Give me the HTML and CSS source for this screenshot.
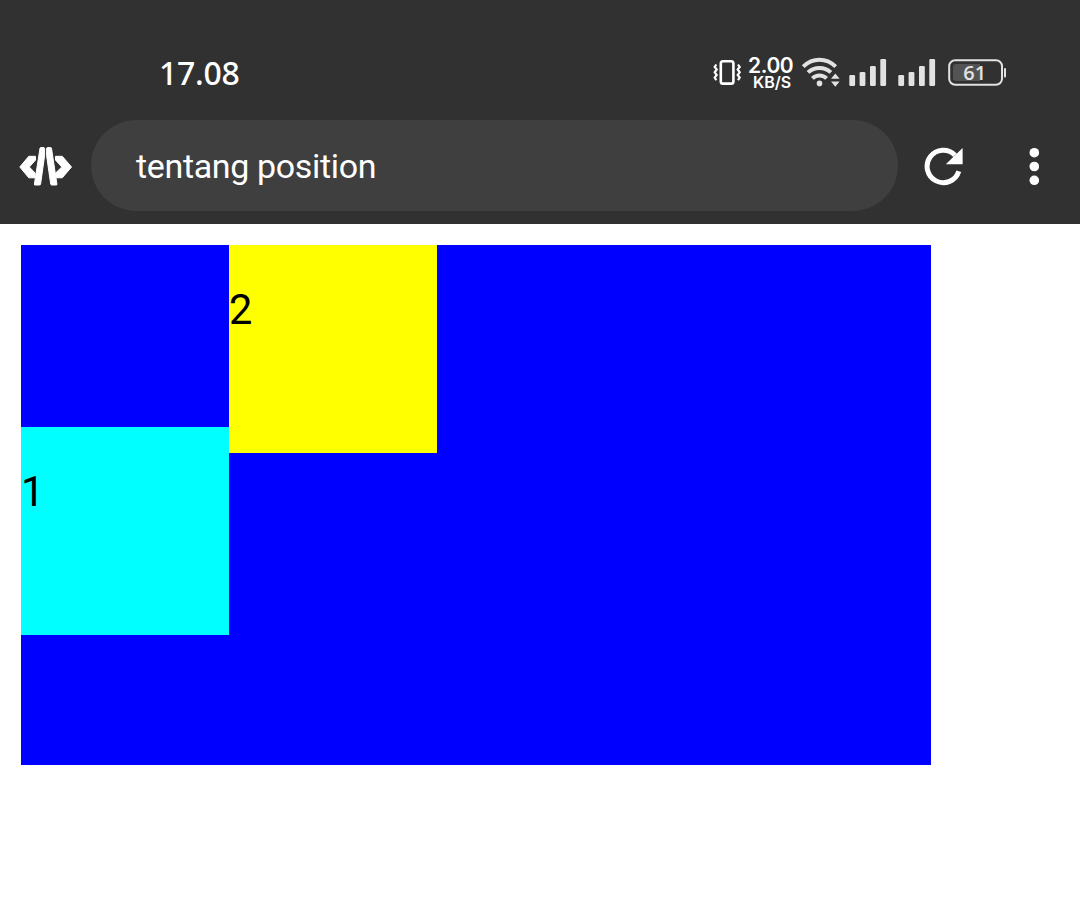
FILE: index.html
```html
<!DOCTYPE html>
<html lang="id">
<head>
<meta charset="utf-8">
<title>tentang position</title>
<link rel="stylesheet" href="styles.css">
</head>
<body>
<header class="chrome">
  <div class="status">
    <span class="time">17.08</span>
    <div class="indicators">
      <svg class="vibrate" width="30" height="30" viewBox="712 57 30 30" fill="none" stroke="#fff">
        <rect x="720.8" y="61.2" width="12.6" height="22.4" rx="2.2" stroke-width="2.6"/>
        <path d="M716.3 64.5l-1.6 2.5 2 2.5-2 2.8 2 2.7-2 2.5 1.6 2.7M738 64.5l1.7 2.5-2 2.5 2 2.8-2 2.7 2 2.5-1.7 2.7" stroke-width="2.2"/>
      </svg>
      <div class="speed"><span class="rate">2.00</span><span class="unit">KB/S</span></div>
      <svg class="wifi" width="40" height="32" viewBox="801 56 40 32">
        <g fill="none" stroke="#e2e2e2" stroke-width="4">
          <path d="M803.2 66.6c9.5-9.2 23-9.2 32.5 0"/>
          <path d="M808 72.4c6.5-6 16.4-6 22.9 0"/>
          <path d="M812.4 78.4c4-4 10.2-4 14.2 0"/>
        </g>
        <circle cx="819.5" cy="83.4" r="2.8" fill="#e2e2e2"/>
        <path d="M831 78.8l4.3-5.2 4.3 5.2zM831 81.5h8.6l-4.3 5.2z" fill="#e2e2e2"/>
      </svg>
      <svg class="signal" width="38" height="28" viewBox="849 59 38 28" fill="#e2e2e2">
        <rect x="849.3" y="75" width="5.8" height="11" rx="1.3"/><rect x="859.6" y="72" width="5.8" height="14" rx="1.3"/><rect x="870" y="66" width="5.8" height="20" rx="1.3"/><rect x="880.3" y="59" width="5.8" height="27" rx="1.3"/>
      </svg>
      <svg class="signal second" width="38" height="28" viewBox="849 59 38 28" fill="#e2e2e2">
        <rect x="849.3" y="75" width="5.8" height="11" rx="1.3"/><rect x="859.6" y="72" width="5.8" height="14" rx="1.3"/><rect x="870" y="66" width="5.8" height="20" rx="1.3"/><rect x="880.3" y="59" width="5.8" height="27" rx="1.3"/>
      </svg>
      <svg class="battery" width="60" height="28" viewBox="948 59 60 28">
        <rect x="949.2" y="60.2" width="52.8" height="24.6" rx="6" fill="none" stroke="#e2e2e2" stroke-width="2"/>
        <path d="M956 64H980V81H956Q953 81 953 78V67Q953 64 956 64z" fill="#535353"/>
        <rect x="1004" y="68" width="2" height="9.5" rx=".8" fill="#e2e2e2"/>
        <text class="charge" x="974.8" y="80" text-anchor="middle">61</text>
      </svg>
    </div>
  </div>
  <div class="toolbar">
    <svg class="logo" width="54" height="42" viewBox="19 146 54 42" fill="#fff" stroke="#fff" stroke-width="1" stroke-linejoin="round">
      <path d="M28.8 156.3h6.7v3.8l-6.2 6.9 5.8 6v4.8h-6.3L19.8 167z"/>
      <path d="M55.5 156.3h6.8L71.5 167l-9.2 10.8h-6.1l-.6-4.8 6.2-6-6.3-6.9z"/>
      <path d="M41 147.5h3l.6.8v7.4L40.6 184q-.2 1-1 1h-5l-.2-1L40 148.3q.2-.8 1-.8z"/>
      <path d="M47.3 147.5h3.2q.8 0 1 .8L56.9 184l-.2 1h-5q-.8 0-1-1L46.6 155.7v-7.4z"/>
    </svg>
    <div class="field">tentang position</div>
    <svg class="reload" width="40" height="40" viewBox="924 147 40 40">
      <path d="M958.8 171.2A16.2 16.2 0 1 1 955 155.2" fill="none" stroke="#fff" stroke-width="5"/>
      <path d="M962.6 148v16.3h-16.8z" fill="#fff"/>
    </svg>
    <svg class="more" width="10" height="40" viewBox="1029 147 10 40" fill="#fff">
      <circle cx="1034.3" cy="152.7" r="4.8"/><circle cx="1034.3" cy="166.5" r="4.8"/><circle cx="1034.3" cy="180.3" r="4.8"/>
    </svg>
  </div>
</header>
<main class="stage">
  <div class="box first"><p>1</p></div>
  <div class="box second-box"><p>2</p></div>
</main>
</body>
</html>
```
FILE: styles.css
```css
* { box-sizing: border-box; }
body {
  margin: 0;
  background: #fff;
  font-family: Roboto, sans-serif;
}
.chrome {
  height: 224px;
  background: #313131;
  color: #fff;
}
svg { display: block; flex: none; }
.status {
  display: flex;
  justify-content: space-between;
  height: 120px;
  padding: 56px 72px 0 159px;
}
.time {
  font: 500 32px/34px "Noto Sans", sans-serif;
  letter-spacing: -.3px;
}
.indicators { display: flex; }
.vibrate { margin-top: 1px; }
.speed {
  display: flex;
  flex-direction: column;
  width: 45px;
  margin-left: 6px;
  white-space: nowrap;
  font-family: Inter, sans-serif;
}
.rate {
  font-size: 21px;
  font-weight: 600;
  line-height: 19px;
  letter-spacing: -.4px;
}
.unit {
  padding-left: 5px;
  font-size: 16px;
  font-weight: 600;
  line-height: 14px;
}
.wifi { margin-left: 8px; }
.signal { margin: 3px 0 0 8px; }
.second { margin-left: 11px; }
.battery { margin: 3px 0 0 12px; }
.charge {
  font: 600 20px "Open Sans", sans-serif;
  fill: #e2e2e2;
}
.toolbar { display: flex; }
.logo { margin: 26px 0 0 19px; }
.field {
  width: 807px;
  height: 91px;
  margin-left: 18px;
  padding-left: 45px;
  border-radius: 46px;
  background: #3f3f3f;
  font-size: 34px;
  line-height: 93px;
  letter-spacing: -.35px;
}
.reload { margin: 27px 0 0 26px; }
.more { margin: 27px 0 0 65px; }
.stage {
  display: flex;
  align-items: flex-start;
  width: 910px;
  height: 520px;
  margin: 21px 0 0 21px;
  background: #00f;
}
.box {
  width: 208px;
  height: 208px;
  padding-top: 40px;
  font-size: 41.6px;
  line-height: 49px;
}
.box p { margin: 0; }
.first { margin-top: 182px; background: #0ff; }
.second-box { background: #ff0; }
```
